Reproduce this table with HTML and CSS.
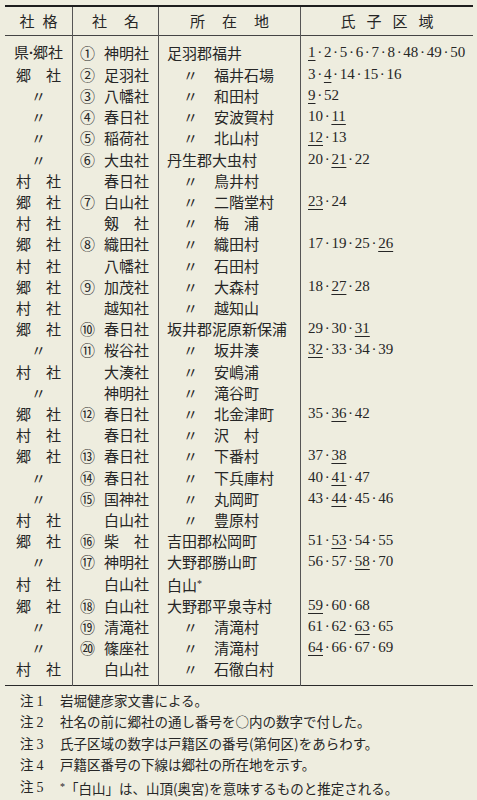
FILE: index.html
```html
<!DOCTYPE html>
<html lang="ja">
<head>
<meta charset="utf-8">
<link rel="stylesheet" href="styles.css">
</head>
<body>
<table class="tbl">
<thead>
<tr>
<th class="c1"><span class="h1">社格</span></th>
<th class="c2"><span class="h2">社名</span></th>
<th class="c3"><span class="h3">所在地</span></th>
<th class="c4"><span class="h4">氏子区域</span></th>
</tr>
</thead>
<tbody>
<tr class="first"><td class="c1">県<span class="nd">·</span>郷社</td><td class="c2"><span class="no">①</span><span class="nm">神明社</span></td><td class="c3">足羽郡福井</td><td class="c4"><span class="u">1</span><span class="d">·</span>2<span class="d">·</span>5<span class="d">·</span>6<span class="d">·</span>7<span class="d">·</span>8<span class="d">·</span>48<span class="d">·</span>49<span class="d">·</span>50</td></tr>
<tr><td class="c1">郷　社</td><td class="c2"><span class="no">②</span><span class="nm">足羽社</span></td><td class="c3"><span class="dt">〃</span>福井石場</td><td class="c4">3<span class="d">·</span><span class="u">4</span><span class="d">·</span>14<span class="d">·</span>15<span class="d">·</span>16</td></tr>
<tr><td class="c1">〃</td><td class="c2"><span class="no">③</span><span class="nm">八幡社</span></td><td class="c3"><span class="dt">〃</span>和田村</td><td class="c4"><span class="u">9</span><span class="d">·</span>52</td></tr>
<tr><td class="c1">〃</td><td class="c2"><span class="no">④</span><span class="nm">春日社</span></td><td class="c3"><span class="dt">〃</span>安波賀村</td><td class="c4">10<span class="d">·</span><span class="u">11</span></td></tr>
<tr><td class="c1">〃</td><td class="c2"><span class="no">⑤</span><span class="nm">稲荷社</span></td><td class="c3"><span class="dt">〃</span>北山村</td><td class="c4"><span class="u">12</span><span class="d">·</span>13</td></tr>
<tr><td class="c1">〃</td><td class="c2"><span class="no">⑥</span><span class="nm">大虫社</span></td><td class="c3">丹生郡大虫村</td><td class="c4">20<span class="d">·</span><span class="u">21</span><span class="d">·</span>22</td></tr>
<tr><td class="c1">村　社</td><td class="c2"><span class="no"></span><span class="nm">春日社</span></td><td class="c3"><span class="dt">〃</span>鳥井村</td><td class="c4"></td></tr>
<tr><td class="c1">郷　社</td><td class="c2"><span class="no">⑦</span><span class="nm">白山社</span></td><td class="c3"><span class="dt">〃</span>二階堂村</td><td class="c4"><span class="u">23</span><span class="d">·</span>24</td></tr>
<tr><td class="c1">村　社</td><td class="c2"><span class="no"></span><span class="nm">剱　社</span></td><td class="c3"><span class="dt">〃</span>梅　浦</td><td class="c4"></td></tr>
<tr><td class="c1">郷　社</td><td class="c2"><span class="no">⑧</span><span class="nm">織田社</span></td><td class="c3"><span class="dt">〃</span>織田村</td><td class="c4">17<span class="d">·</span>19<span class="d">·</span>25<span class="d">·</span><span class="u">26</span></td></tr>
<tr><td class="c1">村　社</td><td class="c2"><span class="no"></span><span class="nm">八幡社</span></td><td class="c3"><span class="dt">〃</span>石田村</td><td class="c4"></td></tr>
<tr><td class="c1">郷　社</td><td class="c2"><span class="no">⑨</span><span class="nm">加茂社</span></td><td class="c3"><span class="dt">〃</span>大森村</td><td class="c4">18<span class="d">·</span><span class="u">27</span><span class="d">·</span>28</td></tr>
<tr><td class="c1">村　社</td><td class="c2"><span class="no"></span><span class="nm">越知社</span></td><td class="c3"><span class="dt">〃</span>越知山</td><td class="c4"></td></tr>
<tr><td class="c1">郷　社</td><td class="c2"><span class="no">⑩</span><span class="nm">春日社</span></td><td class="c3">坂井郡泥原新保浦</td><td class="c4">29<span class="d">·</span>30<span class="d">·</span><span class="u">31</span></td></tr>
<tr><td class="c1">〃</td><td class="c2"><span class="no">⑪</span><span class="nm">桜谷社</span></td><td class="c3"><span class="dt">〃</span>坂井湊</td><td class="c4"><span class="u">32</span><span class="d">·</span>33<span class="d">·</span>34<span class="d">·</span>39</td></tr>
<tr><td class="c1">村　社</td><td class="c2"><span class="no"></span><span class="nm">大湊社</span></td><td class="c3"><span class="dt">〃</span>安嶋浦</td><td class="c4"></td></tr>
<tr><td class="c1">〃</td><td class="c2"><span class="no"></span><span class="nm">神明社</span></td><td class="c3"><span class="dt">〃</span>滝谷町</td><td class="c4"></td></tr>
<tr><td class="c1">郷　社</td><td class="c2"><span class="no">⑫</span><span class="nm">春日社</span></td><td class="c3"><span class="dt">〃</span>北金津町</td><td class="c4">35<span class="d">·</span><span class="u">36</span><span class="d">·</span>42</td></tr>
<tr><td class="c1">村　社</td><td class="c2"><span class="no"></span><span class="nm">春日社</span></td><td class="c3"><span class="dt">〃</span>沢　村</td><td class="c4"></td></tr>
<tr><td class="c1">郷　社</td><td class="c2"><span class="no">⑬</span><span class="nm">春日社</span></td><td class="c3"><span class="dt">〃</span>下番村</td><td class="c4">37<span class="d">·</span><span class="u">38</span></td></tr>
<tr><td class="c1">〃</td><td class="c2"><span class="no">⑭</span><span class="nm">春日社</span></td><td class="c3"><span class="dt">〃</span>下兵庫村</td><td class="c4">40<span class="d">·</span><span class="u">41</span><span class="d">·</span>47</td></tr>
<tr><td class="c1">〃</td><td class="c2"><span class="no">⑮</span><span class="nm">国神社</span></td><td class="c3"><span class="dt">〃</span>丸岡町</td><td class="c4">43<span class="d">·</span><span class="u">44</span><span class="d">·</span>45<span class="d">·</span>46</td></tr>
<tr><td class="c1">村　社</td><td class="c2"><span class="no"></span><span class="nm">白山社</span></td><td class="c3"><span class="dt">〃</span>豊原村</td><td class="c4"></td></tr>
<tr><td class="c1">郷　社</td><td class="c2"><span class="no">⑯</span><span class="nm">柴　社</span></td><td class="c3">吉田郡松岡町</td><td class="c4">51<span class="d">·</span><span class="u">53</span><span class="d">·</span>54<span class="d">·</span>55</td></tr>
<tr><td class="c1">〃</td><td class="c2"><span class="no">⑰</span><span class="nm">神明社</span></td><td class="c3">大野郡勝山町</td><td class="c4">56<span class="d">·</span>57<span class="d">·</span><span class="u">58</span><span class="d">·</span>70</td></tr>
<tr><td class="c1">村　社</td><td class="c2"><span class="no"></span><span class="nm">白山社</span></td><td class="c3">白山<span class="ast">*</span></td><td class="c4"></td></tr>
<tr><td class="c1">郷　社</td><td class="c2"><span class="no">⑱</span><span class="nm">白山社</span></td><td class="c3">大野郡平泉寺村</td><td class="c4"><span class="u">59</span><span class="d">·</span>60<span class="d">·</span>68</td></tr>
<tr><td class="c1">〃</td><td class="c2"><span class="no">⑲</span><span class="nm">清滝社</span></td><td class="c3"><span class="dt">〃</span>清滝村</td><td class="c4">61<span class="d">·</span>62<span class="d">·</span><span class="u">63</span><span class="d">·</span>65</td></tr>
<tr><td class="c1">〃</td><td class="c2"><span class="no">⑳</span><span class="nm">篠座社</span></td><td class="c3"><span class="dt">〃</span>清滝村</td><td class="c4"><span class="u">64</span><span class="d">·</span>66<span class="d">·</span>67<span class="d">·</span>69</td></tr>
<tr class="last"><td class="c1">村　社</td><td class="c2"><span class="no"></span><span class="nm">白山社</span></td><td class="c3"><span class="dt">〃</span>石徹白村</td><td class="c4"></td></tr>
</tbody>
</table>
<ul class="notes">
<li><span class="lbl">注<span class="n">1</span></span><span class="txt">岩堀健彦家文書による。</span></li>
<li><span class="lbl">注<span class="n">2</span></span><span class="txt">社名の前に郷社の通し番号を○内の数字で付した。</span></li>
<li><span class="lbl">注<span class="n">3</span></span><span class="txt">氏子区域の数字は戸籍区の番号(第何区)をあらわす。</span></li>
<li><span class="lbl">注<span class="n">4</span></span><span class="txt">戸籍区番号の下線は郷社の所在地を示す。</span></li>
<li><span class="lbl">注<span class="n">5</span></span><span class="txt"><span class="ast">*</span>「白山」は、山頂(奥宮)を意味するものと推定される。</span></li>
</ul>
</body>
</html>
```

FILE: styles.css
```css
html, body {
  margin: 0;
  padding: 0;
  background: #eeeddf;
}
body {
  font-family: "Noto Sans CJK JP", sans-serif;
  color: #262626;
  font-size: 15px;
}
.tbl {
  margin: 5px 0 0 5px;
  width: 465px;
  border-collapse: collapse;
  table-layout: fixed;
}
.tbl th, .tbl td {
  padding: 0;
  font-weight: normal;
  white-space: nowrap;
  line-height: 21.2px;
  height: 21.2px;
  vertical-align: middle;
}
.tbl thead tr {
  border-top: 2px solid #1e1e1e;
  border-bottom: 1px solid #444;
}
.tbl th {
  height: 28px;
  line-height: 28px;
  text-align: center;
}
.tbl tbody tr.last {
  border-bottom: 1.5px solid #2a2a2a;
}
.tbl tr.first td { padding-top: 4.5px; }
.tbl tr.last td { padding-bottom: 5px; }
.c1 { width: 67px; text-align: center; }
.c2 { width: 85px; border-left: 1px solid #555; }
.c3 { width: 141px; border-left: 1px solid #555; }
.c4 { width: 172px; border-left: 1px solid #555; }
.tbl td.c2 { padding-left: 7px; }
.tbl td.c3 { padding-left: 8px; }
.tbl td.c4 {
  padding-left: 7px;
  font-family: "Liberation Serif", serif;
  font-size: 15px;
}
.h1 { letter-spacing: 8px; margin-right: -8px; }
.h2 { letter-spacing: 17px; margin-right: -17px; }
.h3 { letter-spacing: 17px; margin-right: -17px; }
.h4 { letter-spacing: 11px; margin-right: -11px; }
.nd {
  font-family: "Liberation Serif", serif;
  font-weight: bold;
  margin: 0 -0.5px;
}
.no {
  display: inline-block;
  width: 15px;
  text-align: center;
}
.nm {
  display: inline-block;
  margin-left: 9px;
  width: 45px;
}
.dt {
  display: inline-block;
  width: 47px;
  text-align: center;
}
.d {
  display: inline-block;
  width: 8.4px;
  text-align: center;
}
.u {
  text-decoration: underline;
  text-decoration-thickness: 1px;
  text-underline-offset: 3px;
}
.ast {
  font-family: "Liberation Serif", serif;
  font-size: 10px;
  vertical-align: 4px;
}
.notes {
  list-style: none;
  margin: 4px 0 0 0;
  padding: 0 0 0 20px;
  font-size: 13.5px;
}
.notes li {
  display: flex;
  line-height: 21.6px;
  height: 21.6px;
}
.lbl {
  width: 40px;
  flex: none;
}
.lbl .n {
  font-family: "Liberation Serif", serif;
  font-size: 14px;
  margin-left: 3px;
}
```
